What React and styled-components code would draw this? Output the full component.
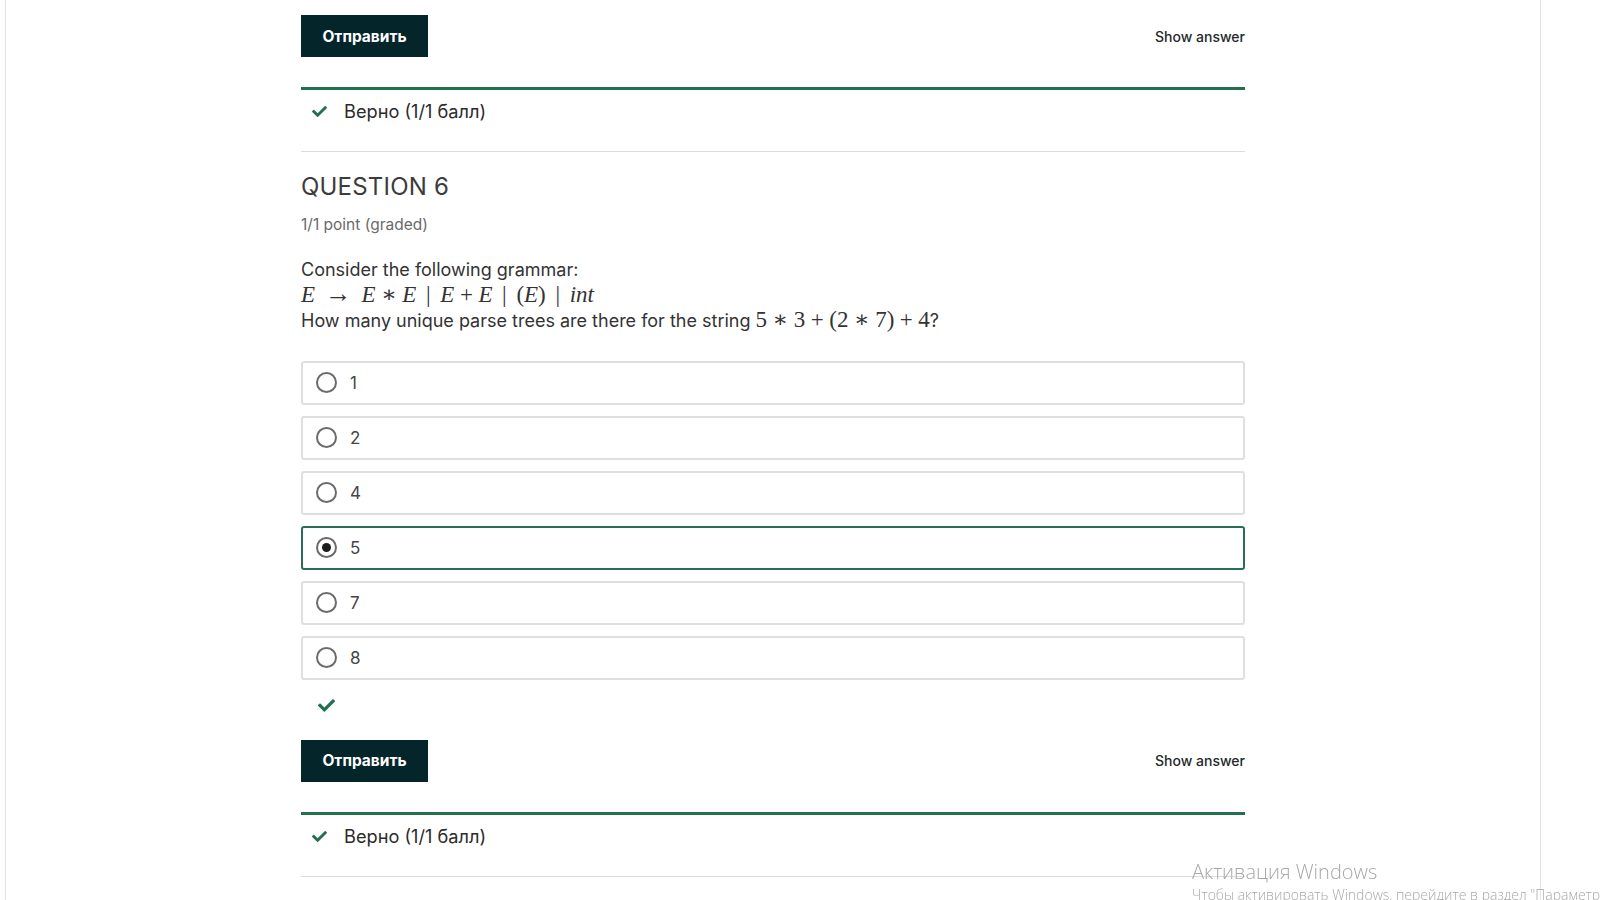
import React from "react";
import styled, { createGlobalStyle } from "styled-components";
import { FaCheck } from "react-icons/fa";

const options = ["1", "2", "4", "5", "7", "8"];
const selected = "5";

const GlobalStyle = createGlobalStyle`
  html, body {
    margin: 0;
    padding: 0;
    background: #fff;
  }
  body {
    font-family: Inter, "Noto Sans", sans-serif;
    color: #313131;
    overflow: hidden;
  }
  #root {
    height: 900px;
    overflow: hidden;
  }
`;

const SubmitRow = () => (
  <ActionRow>
    <SubmitButton>Отправить</SubmitButton>
    <ShowAnswer>Show answer</ShowAnswer>
  </ActionRow>
);

const Verdict = () => (
  <Notification>
    <NotificationRow>
      <CheckMark>
        <FaCheck />
      </CheckMark>
      <span>Верно (1/1 балл)</span>
    </NotificationRow>
  </Notification>
);

const App = () => {
  return (
    <>
      <GlobalStyle />
      <Page>
        <Column>
          <SubmitRow />
          <Verdict />
          <Divider />

          <QuestionTitle>QUESTION 6</QuestionTitle>
          <Points>1/1 point (graded)</Points>

          <Prompt>
            <PromptLine>Consider the following grammar:</PromptLine>
            <PromptLine>
              <MathLine>
                <Var>E</Var>
                <Op $space={0.38} $big>→</Op>
                <Var>E</Var>
                <Op $space={0.24}>∗</Op>
                <Var>E</Var>
                <Op $space={0.42}>|</Op>
                <Var>E</Var>
                <Op $space={0.24}>+</Op>
                <Var>E</Var>
                <Op $space={0.42}>|</Op>
                <Num>(</Num>
                <Var>E</Var>
                <Num>)</Num>
                <Op $space={0.42}>|</Op>
                <Var>int</Var>
              </MathLine>
            </PromptLine>
            <PromptLine>
              How many unique parse trees are there for the string{" "}
              <MathLine>
                <Num>5</Num>
                <Op $space={0.24}>∗</Op>
                <Num>3</Num>
                <Op $space={0.24}>+</Op>
                <Num>(2</Num>
                <Op $space={0.24}>∗</Op>
                <Num>7)</Num>
                <Op $space={0.24}>+</Op>
                <Num>4</Num>
              </MathLine>
              ?
            </PromptLine>
          </Prompt>

          <ChoiceList>
            {options.map((opt) => (
              <Choice key={opt} $checked={opt === selected}>
                <Radio $checked={opt === selected} />
                <ChoiceLabel>{opt}</ChoiceLabel>
              </Choice>
            ))}
          </ChoiceList>

          <StatusIcon>
            <FaCheck />
          </StatusIcon>

          <SubmitRow />
          <Verdict />
          <Divider />
        </Column>
      </Page>

      <Watermark>
        <WatermarkTitle>Активация Windows</WatermarkTitle>
        <WatermarkText>
          Чтобы активировать Windows, перейдите в раздел "Параметры".
        </WatermarkText>
      </Watermark>
    </>
  );
};

const Page = styled.div`
  box-sizing: border-box;
  width: 1536px;
  min-height: 900px;
  margin-left: 5px;
  border-left: 1px solid #e4e4e4;
  border-right: 1px solid #e4e4e4;
  padding-top: 15px;
`;

const Column = styled.div`
  width: 944px;
  margin: 0 auto;
  display: flex;
  flex-direction: column;
`;

const ActionRow = styled.div`
  display: flex;
  justify-content: space-between;
  align-items: center;
  height: 42px;
`;

const SubmitButton = styled.button`
  height: 42px;
  width: 127px;
  border: none;
  border-radius: 0;
  background: #04262b;
  color: #fff;
  font-family: Inter, sans-serif;
  font-size: 15.5px;
  font-weight: 700;
  cursor: pointer;
`;

const ShowAnswer = styled.span`
  font-size: 14px;
  font-weight: 500;
  color: #1f2a2b;
`;

const Notification = styled.div`
  margin-top: 30px;
  border-top: 3px solid #23704f;
`;

const NotificationRow = styled.div`
  display: flex;
  align-items: center;
  padding: 8px 0 26px 11px;
  line-height: 27px;
  font-size: 18.2px;
  color: #2b2b2b;
`;

const CheckMark = styled.span`
  display: flex;
  width: 32px;
  color: #23704f;
  font-size: 15px;
`;

const Divider = styled.hr`
  margin: 0;
  border: none;
  border-top: 1px solid #dcdcdc;
`;

const QuestionTitle = styled.h3`
  margin: 19.5px 0 0;
  font-size: 24px;
  line-height: 30px;
  font-weight: 400;
  color: #3c3c3c;
  letter-spacing: 0.2px;
`;

const Points = styled.div`
  margin-top: 13.5px;
  font-size: 15.5px;
  line-height: 20px;
  font-weight: 400;
  color: #6a6a6a;
`;

const Prompt = styled.div`
  margin-top: 22px;
  font-size: 18px;
  line-height: 25.5px;
  color: #333;
`;

const PromptLine = styled.div`
  height: 25.5px;
  white-space: nowrap;
`;

const MathLine = styled.span`
  font-family: "Liberation Serif", "DejaVu Serif", serif;
  font-size: 23px;
  line-height: 1;
  white-space: nowrap;
`;

const Var = styled.span`
  font-style: italic;
`;

const Num = styled.span`
  font-style: normal;
`;

const Op = styled.span`
  margin: 0 ${(p) => p.$space}em;
  font-size: ${(p) => (p.$big ? "1.15em" : "1em")};
  line-height: 0;
`;

const ChoiceList = styled.div`
  margin-top: 27px;
  display: flex;
  flex-direction: column;
  gap: 11px;
`;

const Choice = styled.label`
  box-sizing: border-box;
  height: 44px;
  display: flex;
  align-items: center;
  padding-left: 13px;
  border: 2px solid ${(p) => (p.$checked ? "#2a6e55" : "#dfdfdf")};
  border-radius: 3px;
  background: #fff;
`;

const Radio = styled.span`
  box-sizing: border-box;
  width: 21px;
  height: 21px;
  border-radius: 50%;
  border: 2px solid #6b6b6b;
  display: flex;
  align-items: center;
  justify-content: center;
  flex-shrink: 0;

  &::after {
    content: "";
    display: ${(p) => (p.$checked ? "block" : "none")};
    width: 9px;
    height: 9px;
    border-radius: 50%;
    background: #1d1d1d;
  }
`;

const ChoiceLabel = styled.span`
  margin-left: 13px;
  font-size: 17px;
  color: #454545;
`;

const StatusIcon = styled.div`
  display: flex;
  margin: 18px 0 26px 17px;
  height: 16px;
  align-items: center;
  color: #23704f;
  font-size: 17px;
`;

const Watermark = styled.div`
  position: fixed;
  left: 1192px;
  top: 858px;
  pointer-events: none;
  font-family: "Open Sans", "Noto Sans", sans-serif;
  color: #a8a8a8;
  white-space: nowrap;
`;

const WatermarkTitle = styled.div`
  font-size: 20px;
  font-weight: 300;
  line-height: 28px;
`;

const WatermarkText = styled.div`
  font-size: 14px;
  font-weight: 300;
  line-height: 18px;
`;

export default App;
